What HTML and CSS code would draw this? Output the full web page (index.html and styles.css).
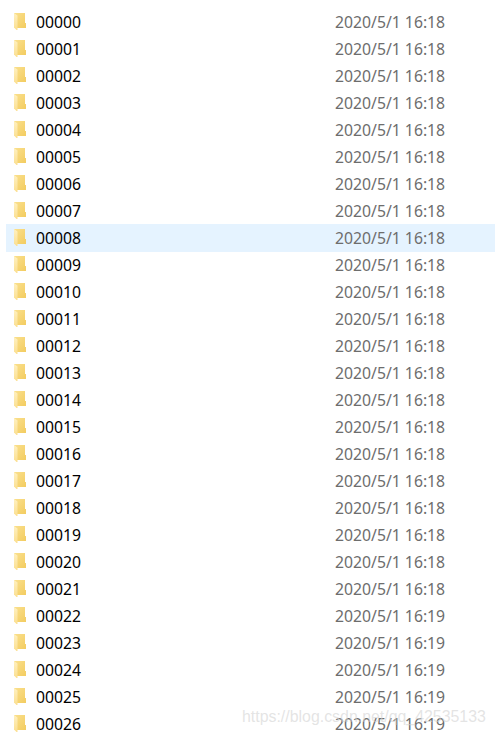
FILE: index.html
```html
<!DOCTYPE html>
<html lang="zh-CN">
<head>
<meta charset="utf-8">
<title>Folders</title>
<link rel="stylesheet" href="styles.css">
</head>
<body>
<svg class="defs" width="0" height="0" aria-hidden="true">
  <defs>
    <linearGradient id="back" x1="0" y1="0" x2="1" y2="1"><stop offset="0" stop-color="#fae08e"/><stop offset="1" stop-color="#f3cc60"/></linearGradient>
    <linearGradient id="flap" x1="0" y1="0" x2="0" y2="1"><stop offset="0" stop-color="#fff0bf"/><stop offset="1" stop-color="#fbdf90"/></linearGradient>
    <symbol id="folder" viewBox="0 0 14 18">
      <path fill="url(#back)" d="M0 1h11v10h1v5H3L0 14z"/>
      <path fill="url(#flap)" d="M0 1l3.500 2.500V18H2.500L0 15.500z"/>
    </symbol>
  </defs>
</svg>
<main class="list" id="list"></main>
<div class="watermark">https://blog.csdn.net/qq_42535133</div>
<script src="list.js"></script>
</body>
</html>
```
FILE: styles.css
```css
body {
  margin: 0;
  height: 735px;
  overflow: hidden;
  position: relative;
  background: #fff;
  color: #000;
  font: 15.75px/29px "Noto Sans", "Open Sans", sans-serif;
}

.defs {
  position: absolute;
}

.list {
  padding: 8px 0 0 6px;
}

.row {
  display: grid;
  grid-template-columns: 22px 299px 1fr;
  height: 27px;
  padding-left: 8px;
  white-space: nowrap;
}

.row.active {
  background: #e5f3ff;
  box-shadow: 0 1px #e5f3ff;
}

.icon {
  width: 14px;
  height: 18px;
  margin-top: 4px;
}

.date {
  color: #6d6d6d;
}

.watermark {
  position: absolute;
  left: 242px;
  top: 707px;
  font: 15.9px/20px "Liberation Sans", sans-serif;
  color: rgba(210, 210, 210, 0.6);
  white-space: nowrap;
}
```
FILE: list.js
```js
const list = document.getElementById("list");

for (let i = 0; i < 27; i++) {
  const row = document.createElement("div");
  row.className = i === 8 ? "row active" : "row";
  const minute = i < 22 ? 18 : 19;
  row.innerHTML = `<svg class="icon"><use href="#folder"/></svg>
    <span class="name">${String(i).padStart(5, "0")}</span>
    <span class="date">2020/5/1 16:${minute}</span>`;
  list.append(row);
}
```
